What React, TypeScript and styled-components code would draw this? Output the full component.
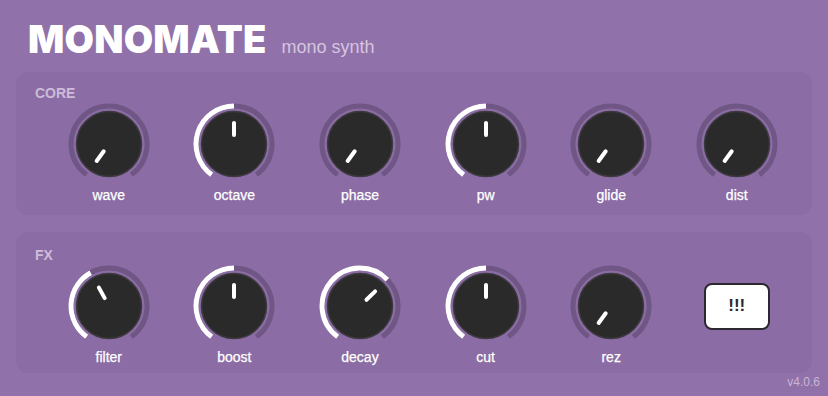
import React from "react";
import styled, {createGlobalStyle} from "styled-components";

const GlobalStyle = createGlobalStyle`
  html, body {
    margin: 0;
    padding: 0;
    background: #9071a9;
  }
`;

const SWEEP = 144;

interface KnobData {
  name: string;
  value: number;
}

const coreKnobs: KnobData[] = [
  {name: "wave", value: 0},
  {name: "octave", value: 0.5},
  {name: "phase", value: 0},
  {name: "pw", value: 0.5},
  {name: "glide", value: 0},
  {name: "dist", value: 0},
];

const fxKnobs: KnobData[] = [
  {name: "filter", value: 0.4},
  {name: "boost", value: 0.5},
  {name: "decay", value: 0.66},
  {name: "cut", value: 0.5},
  {name: "rez", value: 0},
];

const Page = styled.div`
  width: 828px;
  height: 396px;
  box-sizing: border-box;
  padding: 0 16px;
  background: #9071a9;
  font-family: "Liberation Sans", Arial, sans-serif;
  overflow: hidden;
`;

const Header = styled.header`
  height: 72px;
  box-sizing: border-box;
  padding: 20px 12px 0;
  display: flex;
  align-items: baseline;
  gap: 15px;
`;

const Title = styled.h1`
  margin: 0;
  font-family: Inter, "Liberation Sans", sans-serif;
  font-weight: 900;
  font-size: 38px;
  line-height: 38px;
  color: #ffffff;
  letter-spacing: 0.2px;
`;

const Subtitle = styled.span`
  font-size: 18px;
  color: #d5c5e1;
`;

const Panel = styled.section<{$top?: number; $height: number; $padTop: number}>`
  height: ${p => p.$height}px;
  box-sizing: border-box;
  margin-top: ${p => p.$top ?? 0}px;
  padding: ${p => p.$padTop}px 0 0 19px;
  border-radius: 12px;
  background: #8b6ca4;
`;

const SectionLabel = styled.div`
  font-size: 14px;
  line-height: 16px;
  font-weight: 700;
  color: #cdbcda;
`;

const KnobRow = styled.div`
  display: grid;
  grid-template-columns: repeat(6, 125.6px);
  margin-left: 11px;
  margin-top: 1px;
`;

const KnobCell = styled.div`
  display: flex;
  flex-direction: column;
  align-items: center;
`;

const KnobLabel = styled.div`
  margin-top: 1px;
  font-size: 14px;
  line-height: 16px;
  color: #ffffff;
  -webkit-text-stroke: 0.25px #ffffff;
`;

const ButtonCell = styled.div`
  height: 84px;
  display: flex;
  align-items: center;
  justify-content: center;
`;

const AlertButton = styled.button`
  width: 66px;
  height: 47px;
  box-sizing: border-box;
  border: 2px solid #2b2830;
  border-radius: 8px;
  background: #ffffff;
  color: #2b2830;
  font-family: "Liberation Sans", Arial, sans-serif;
  font-weight: 700;
  font-size: 17px;
  cursor: pointer;
`;

const Version = styled.div`
  text-align: right;
  margin-right: -8px;
  padding-top: 1px;
  font-size: 12px;
  line-height: 16px;
  color: #c8b6d6;
`;

const polar = (r: number, deg: number) => {
  const rad = (deg * Math.PI) / 180;
  return [42 + r * Math.sin(rad), 42 - r * Math.cos(rad)];
};

const arc = (r: number, from: number, to: number) => {
  const [x0, y0] = polar(r, from);
  const [x1, y1] = polar(r, to);
  const large = to - from > 180 ? 1 : 0;
  return `M ${x0} ${y0} A ${r} ${r} 0 ${large} 1 ${x1} ${y1}`;
};

const Knob: React.FC<KnobData> = ({name, value}) => {
  const angle = -SWEEP + value * SWEEP * 2;
  const [px0, py0] = polar(9, angle);
  const [px1, py1] = polar(21, angle);
  return (
    <KnobCell>
      <svg width="84" height="84" viewBox="0 0 84 84">
        <path d={arc(38, -SWEEP, SWEEP)} fill="none" stroke="#6f5685" strokeWidth="5" />
        {value > 0 && <path d={arc(38, -SWEEP, angle)} fill="none" stroke="#ffffff" strokeWidth="5" />}
        <circle cx="42" cy="42" r="32.5" fill="#2a2a2a" stroke="#3c3a3f" strokeWidth="1.5" />
        <line x1={px0} y1={py0} x2={px1} y2={py1} stroke="#ffffff" strokeWidth="4" strokeLinecap="round" />
      </svg>
      <KnobLabel>{name}</KnobLabel>
    </KnobCell>
  );
};

const App: React.FC = () => {
  return (
    <Page>
      <GlobalStyle />
      <Header>
        <Title>MONOMATE</Title>
        <Subtitle>mono synth</Subtitle>
      </Header>
      <Panel $height={143} $padTop={13}>
        <SectionLabel>CORE</SectionLabel>
        <KnobRow>
          {coreKnobs.map(k => <Knob key={k.name} {...k} />)}
        </KnobRow>
      </Panel>
      <Panel $top={17} $height={141} $padTop={15}>
        <SectionLabel>FX</SectionLabel>
        <KnobRow>
          {fxKnobs.map(k => <Knob key={k.name} {...k} />)}
          <ButtonCell>
            <AlertButton>!!!</AlertButton>
          </ButtonCell>
        </KnobRow>
      </Panel>
      <Version>v4.0.6</Version>
    </Page>
  );
};

export default App;
